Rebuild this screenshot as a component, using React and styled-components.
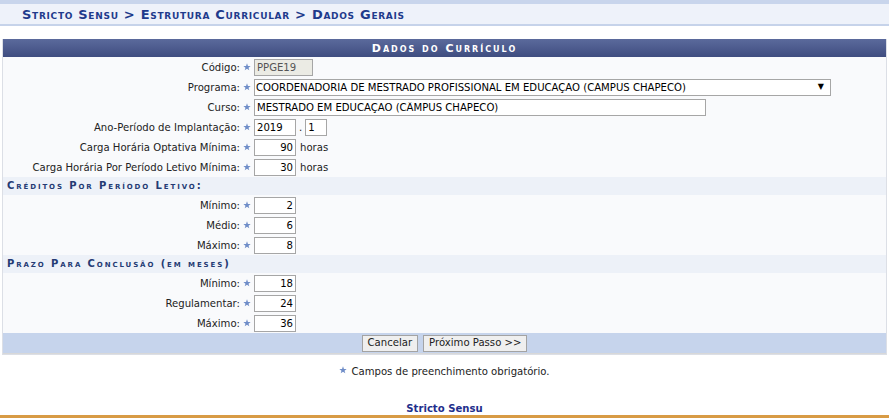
import React from 'react';
import styled, { createGlobalStyle } from 'styled-components';

const GlobalStyle = createGlobalStyle`
  body {
    margin: 0;
    background: #fff;
    font-family: "DejaVu Sans", Verdana, sans-serif;
    font-size: 10.1px;
    color: #222;
  }
`;

const TopStrip = styled.div`
  height: 4px;
  background: #c8d5ec;
`;

const Breadcrumb = styled.h2`
  margin: 0;
  height: 20px;
  line-height: 21px;
  padding-left: 22px;
  background: #eef2fa;
  border-bottom: 2px solid #c6d3ea;
  color: #1f3b8c;
  font-size: 13px;
  font-weight: bold;
  font-variant: small-caps;
  letter-spacing: 0.7px;
`;

const FormTable = styled.div`
  margin: 13px 2px 0;
  border: 1px solid #dcdfe6;
  border-top: none;
  background: #f9fafc;
`;

const Caption = styled.div`
  height: 18px;
  line-height: 19px;
  text-align: center;
  color: #fff;
  font-size: 11px;
  font-weight: bold;
  font-variant: small-caps;
  letter-spacing: 2px;
  background: linear-gradient(#5b6a9c, #3f4d80);
`;

const Row = styled.div`
  display: grid;
  grid-template-columns: 237px 14px 1fr;
  align-items: center;
  height: 20px;
`;

const Label = styled.label`
  text-align: right;
  white-space: nowrap;
`;

const Field = styled.div`
  display: flex;
  align-items: center;
  gap: ${(p) => p.gap || 4}px;
`;

const Input = styled.input`
  box-sizing: border-box;
  height: 17px;
  width: ${(p) => p.w}px;
  margin: 0;
  padding: 0 2px;
  border: 1px solid #a6a6a6;
  background: ${(p) => (p.readOnly ? '#ebebe4' : '#fff')};
  color: ${(p) => (p.readOnly ? '#555' : '#000')};
  font-family: inherit;
  font-size: 10.1px;
  text-align: ${(p) => (p.num ? 'right' : 'left')};
  outline: none;
`;

const SelectWrap = styled.div`
  position: relative;
  width: 577px;
`;

const Select = styled.select`
  box-sizing: border-box;
  width: 100%;
  height: 17px;
  margin: 0;
  padding: 0 1px;
  border: 1px solid #a6a6a6;
  background: #fff;
  color: #000;
  font-family: inherit;
  font-size: 10.1px;
  appearance: none;
  outline: none;
`;

const Arrow = styled.span`
  position: absolute;
  right: 7px;
  top: 3px;
  font-size: 8px;
  color: #000;
  pointer-events: none;
`;

const Unit = styled.span`
  color: #222;
`;

const SubHeader = styled.div`
  height: 18px;
  line-height: 18px;
  padding-left: 4px;
  background: #edf1f8;
  color: #253b74;
  font-weight: bold;
  font-size: 10px;
  font-variant: small-caps;
  letter-spacing: 1.9px;
`;

const Footer = styled.div`
  display: flex;
  justify-content: center;
  align-items: center;
  gap: 5px;
  height: 20px;
  background: #c6d4ec;
  border-bottom: 1px solid #d8d8d8;
`;

const Button = styled.button`
  height: 17px;
  margin: 0;
  padding: 0 5px;
  border: 1px solid #a3a3a3;
  background: #efefef;
  color: #222;
  font-family: inherit;
  font-size: 10.1px;
  line-height: 14px;
`;

const Note = styled.p`
  margin: 11px 0 0;
  display: flex;
  justify-content: center;
  align-items: flex-start;
  gap: 4px;
`;

const PageFooter = styled.footer`
  margin-top: 25px;
  height: 13px;
  line-height: 13px;
  text-align: center;
  color: #1f2f8c;
  font-weight: bold;
  border-bottom: 3px solid #d89b45;
  box-shadow: 0 4px 0 #3f4b7e;
`;

const StarIcon = () => (
  <svg width="8" height="8" viewBox="0 0 10 10" aria-hidden="true">
    <path
      d="M5 0.4 L6.2 3.6 L9.6 3.7 L6.9 5.8 L7.9 9.2 L5 7.2 L2.1 9.2 L3.1 5.8 L0.4 3.7 L3.8 3.6 Z"
      fill="#6f8dc8"
    />
  </svg>
);

const Star = styled.span`
  display: flex;
  justify-content: center;
  align-items: center;
`;

const FormRow = ({ label, gap, children }) => (
  <Row>
    <Label>{label}</Label>
    <Star>
      <StarIcon />
    </Star>
    <Field gap={gap}>{children}</Field>
  </Row>
);

export default function App() {
  return (
    <>
      <GlobalStyle />
      <TopStrip />
      <Breadcrumb>Stricto Sensu &gt; Estrutura Curricular &gt; Dados Gerais</Breadcrumb>

      <FormTable>
        <Caption>Dados do Currículo</Caption>
        <FormRow label="Código:">
          <Input w={59} readOnly defaultValue="PPGE19" />
        </FormRow>
        <FormRow label="Programa:">
          <SelectWrap>
            <Select defaultValue="1">
              <option value="1">COORDENADORIA DE MESTRADO PROFISSIONAL EM EDUCAÇÃO (CAMPUS CHAPECÓ)</option>
            </Select>
            <Arrow>▼</Arrow>
          </SelectWrap>
        </FormRow>
        <FormRow label="Curso:">
          <Input w={452} defaultValue="MESTRADO EM EDUCAÇÃO (CÂMPUS CHAPECÓ)" />
        </FormRow>
        <FormRow label="Ano-Período de Implantação:" gap={3}>
          <Input w={42} defaultValue="2019" />
          <Unit>.</Unit>
          <Input w={22} defaultValue="1" />
        </FormRow>
        <FormRow label="Carga Horária Optativa Mínima:">
          <Input w={42} num defaultValue="90" />
          <Unit>horas</Unit>
        </FormRow>
        <FormRow label="Carga Horária Por Período Letivo Mínima:">
          <Input w={42} num defaultValue="30" />
          <Unit>horas</Unit>
        </FormRow>

        <SubHeader>Créditos Por Período Letivo:</SubHeader>
        <FormRow label="Mínimo:">
          <Input w={42} num defaultValue="2" />
        </FormRow>
        <FormRow label="Médio:">
          <Input w={42} num defaultValue="6" />
        </FormRow>
        <FormRow label="Máximo:">
          <Input w={42} num defaultValue="8" />
        </FormRow>

        <SubHeader>Prazo Para Conclusão (em meses)</SubHeader>
        <FormRow label="Mínimo:">
          <Input w={42} num defaultValue="18" />
        </FormRow>
        <FormRow label="Regulamentar:">
          <Input w={42} num defaultValue="24" />
        </FormRow>
        <FormRow label="Máximo:">
          <Input w={42} num defaultValue="36" />
        </FormRow>

        <Footer>
          <Button>Cancelar</Button>
          <Button>Próximo Passo &gt;&gt;</Button>
        </Footer>
      </FormTable>

      <Note>
        <StarIcon />
        <span>Campos de preenchimento obrigatório.</span>
      </Note>

      <PageFooter>Stricto Sensu</PageFooter>
    </>
  );
}
